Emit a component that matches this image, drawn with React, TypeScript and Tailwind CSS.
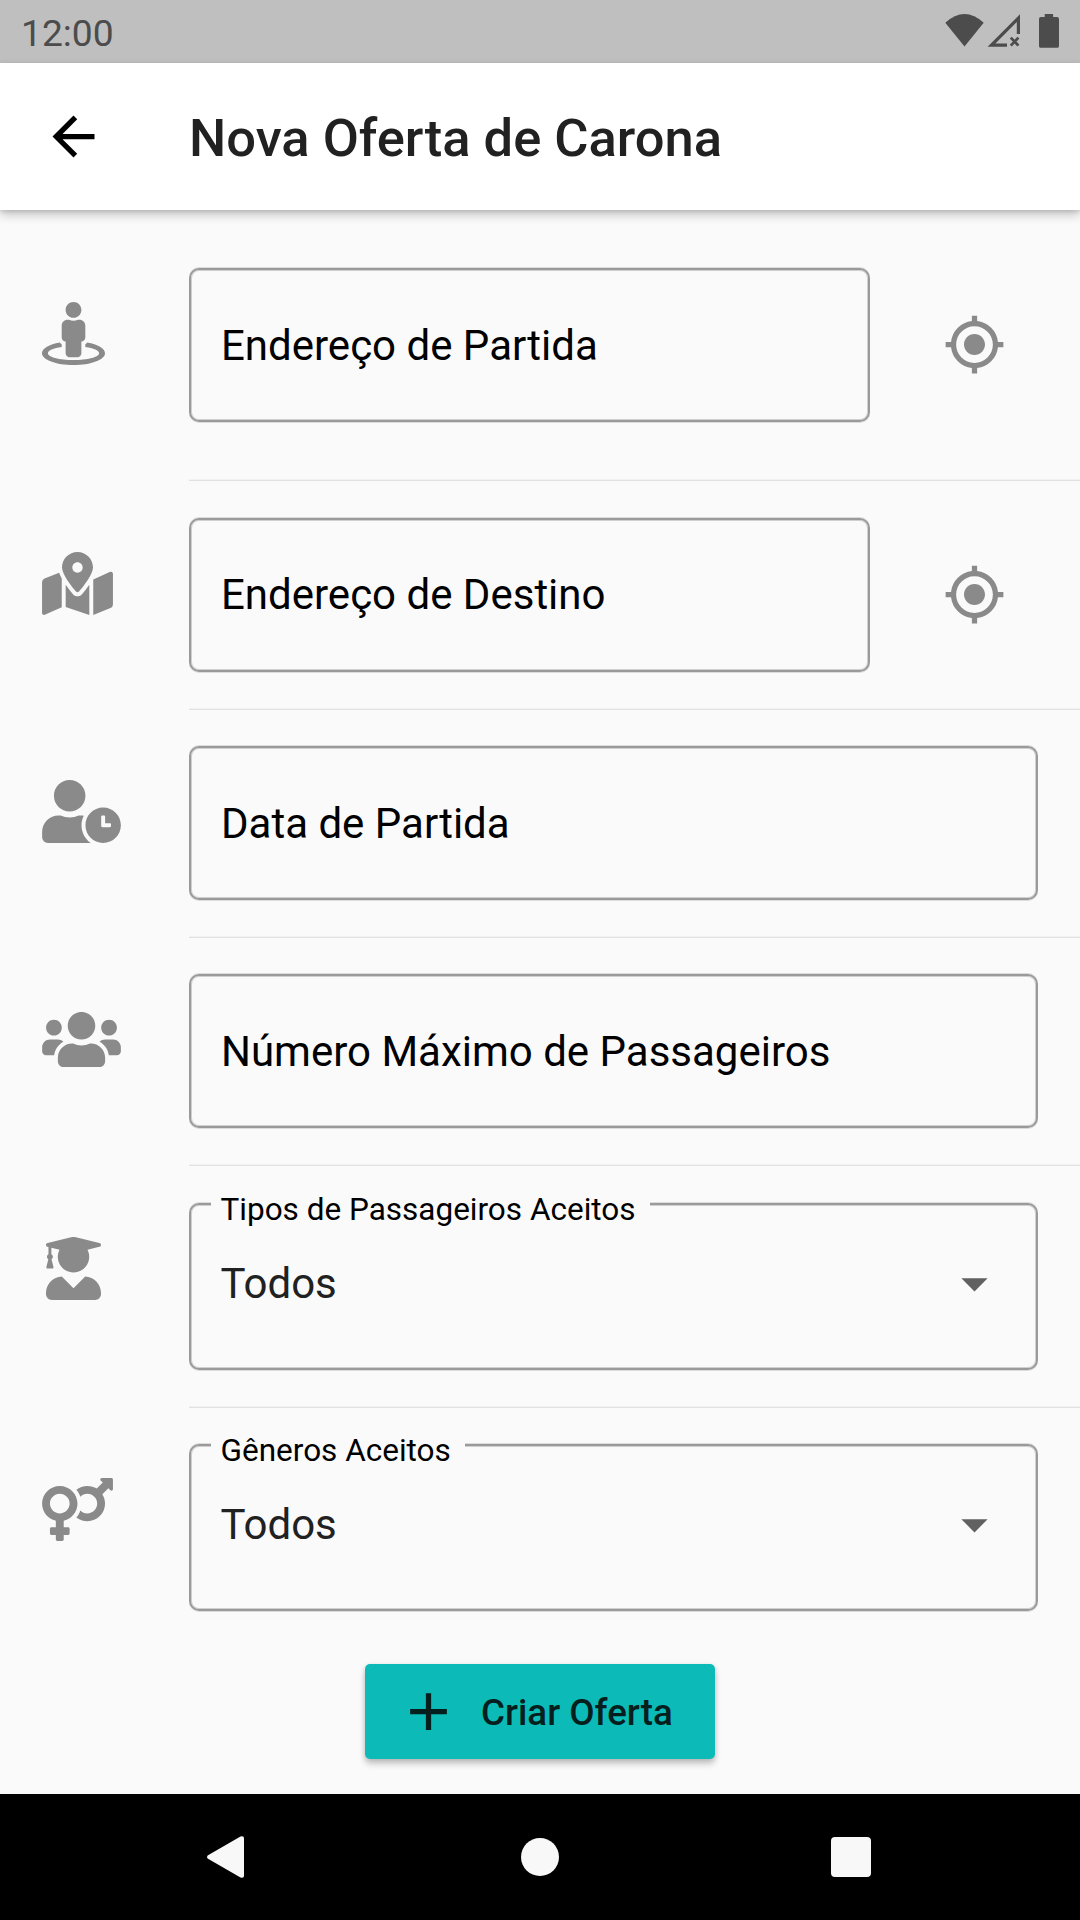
import type { ReactNode } from "react";
import { FaStreetView, FaMapMarkedAlt, FaUserClock, FaUsers, FaUserGraduate, FaVenusMars } from "react-icons/fa";
import { MdArrowBack, MdGpsFixed, MdAdd, MdArrowDropDown } from "react-icons/md";

function StatusBar() {
  return (
    <div className="flex h-[63px] items-center justify-between bg-[#bfbfbf] pl-[21px] text-[#4c4c4c]">
      <span className="pt-[3px] text-[37.2px] leading-[60px]">12:00</span>
      <svg className="h-[63px] w-[135px]" viewBox="945 0 135 63" fill="currentColor">
        <path d="M945.3 22.8Q964.5 5.4 983.7 22.8L964.5 46.4Z" />
        <path fillRule="evenodd" d="M987.6 46.7L1020 14.3V34h-3.2V22L995.4 43.4H1007v3.3Z" />
        <path d="M1010.8 37.6l7.6 8M1018.4 37.6l-7.6 8" stroke="currentColor" strokeWidth="2.8" fill="none" />
        <path d="M1044.7 14h8.4v3h4q1.9 0 1.9 1.9v27q0 1.9-1.9 1.9h-16.2q-1.9 0-1.9-1.9v-27q0-1.9 1.9-1.9h3.8z" />
      </svg>
    </div>
  );
}

function Row({ icon, className, children }: { icon: ReactNode; className: string; children: ReactNode }) {
  return (
    <div className={`flex ${className}`}>
      <div className="w-[147px] shrink-0 pt-[34px] text-[#8a8a8a]">{icon}</div>
      {children}
    </div>
  );
}

function Divider() {
  return <hr className="ml-[147px] border-t border-[#e1e1e1] shadow-[0_-1px_0_0_#f2f2f2]" />;
}

function Field({ label, className = "pt-px" }: { label: string; className?: string }) {
  return (
    <div
      className={`flex h-[154px] flex-1 items-center rounded-[10px] border-2 border-[#9a9a9a] pl-[30px] text-[42px] text-black shadow-[inset_0_0_0_1px_#d0d0d0,0_1px_0_0_#dcdcdc,0_-1px_0_0_#dcdcdc] ${className}`}
    >
      {label}
    </div>
  );
}

function SelectField({ label, value }: { label: string; value: string }) {
  return (
    <fieldset className="-mt-[18px] h-[185px] min-w-0 flex-1 rounded-[10px] border-2 border-[#9a9a9a] pl-[20px] shadow-[inset_0_0_0_1px_#d0d0d0,0_1px_0_0_#dcdcdc,0_-1px_0_0_#dcdcdc]">
      <legend className="h-[38px] bg-[#fafafa] pr-[14.5px] pl-[9.5px] text-[31.5px] leading-[49px] text-black">{label}</legend>
      <div className="flex items-center justify-between pt-[29px] pr-[30px] pl-[9.5px]">
        <span className="text-[42px] leading-[63px] text-[#212121]">{value}</span>
        <MdArrowDropDown className="size-[63px] text-[#616161]" />
      </div>
    </fieldset>
  );
}

export default function App() {
  return (
    <div className="flex h-[1920px] w-[1080px] flex-col overflow-hidden bg-[#fafafa] font-['Roboto',sans-serif]">
      <StatusBar />
      <header className="z-10 flex h-[147px] items-center bg-white pl-[42px] shadow-[0_5px_10px_rgba(0,0,0,0.2),0_2px_4px_rgba(0,0,0,0.12)]">
        <MdArrowBack className="size-[63px] text-black" />
        <h1 className="ml-[84px] pt-[2px] text-[52.5px] leading-[62px] font-medium text-[#212121]">Nova Oferta de Carona</h1>
      </header>
      <main className="flex flex-1 flex-col pl-[42px]">
        <Row className="h-[270px] pt-[58px]" icon={<FaStreetView className="h-[63px] w-[63px]" />}>
          <Field label="Endereço de Partida" />
          <MdGpsFixed className="mt-[45px] mr-[73.75px] ml-[73.25px] size-[63px] text-[#8a8a8a]" />
        </Row>
        <Divider />
        <Row className="h-[228px] pt-[37px]" icon={<FaMapMarkedAlt className="h-[63px] w-[71px]" />}>
          <Field label="Endereço de Destino" className="pb-px" />
          <MdGpsFixed className="mt-[45px] mr-[73.75px] ml-[73.25px] size-[63px] text-[#8a8a8a]" />
        </Row>
        <Divider />
        <Row className="h-[227px] pt-[36px] pr-[42px]" icon={<FaUserClock className="h-[63px] w-[79px]" />}>
          <Field label="Data de Partida" />
        </Row>
        <Divider />
        <Row className="h-[227px] pt-[36px] pr-[42px]" icon={<FaUsers className="h-[63px] w-[79px]" />}>
          <Field label="Número Máximo de Passageiros" />
        </Row>
        <Divider />
        <Row className="h-[241px] pt-[37px] pr-[42px]" icon={<FaUserGraduate className="ml-[4px] h-[63px] w-[55px]" />}>
          <SelectField label="Tipos de Passageiros Aceitos" value="Todos" />
        </Row>
        <Divider />
        <Row className="h-[256px] pt-[36px] pr-[42px]" icon={<FaVenusMars className="h-[63px] w-[71px]" />}>
          <SelectField label="Gêneros Aceitos" value="Todos" />
        </Row>
        <button className="ml-[323px] flex h-[95px] w-[350px] items-center rounded-[5px] bg-[#0cbbb7] pl-[32px] text-[36.75px] font-medium text-[#041f1e] shadow-[0_5px_6px_rgba(0,0,0,0.2),0_1px_5px_rgba(0,0,0,0.12)]">
          <MdAdd className="size-[63px]" />
          <span className="ml-[21px] pt-[2px]">Criar Oferta</span>
        </button>
      </main>
      <nav className="flex h-[126px] items-center bg-black pl-[207px] text-[#f8f8f8]">
        <svg className="h-[42px] w-[37px]" viewBox="0 0 37 42" fill="currentColor">
          <path d="M1 19.2L33.5 0.5Q37 -0.8 37 2.5V39.5Q37 42.8 33.5 41.5L1 22.8Q-1 21 1 19.2Z" />
        </svg>
        <div className="ml-[277px] size-[38px] rounded-full bg-[#f8f8f8]" />
        <div className="ml-[272px] size-[40px] rounded-[4px] bg-[#f8f8f8]" />
      </nav>
    </div>
  );
}
